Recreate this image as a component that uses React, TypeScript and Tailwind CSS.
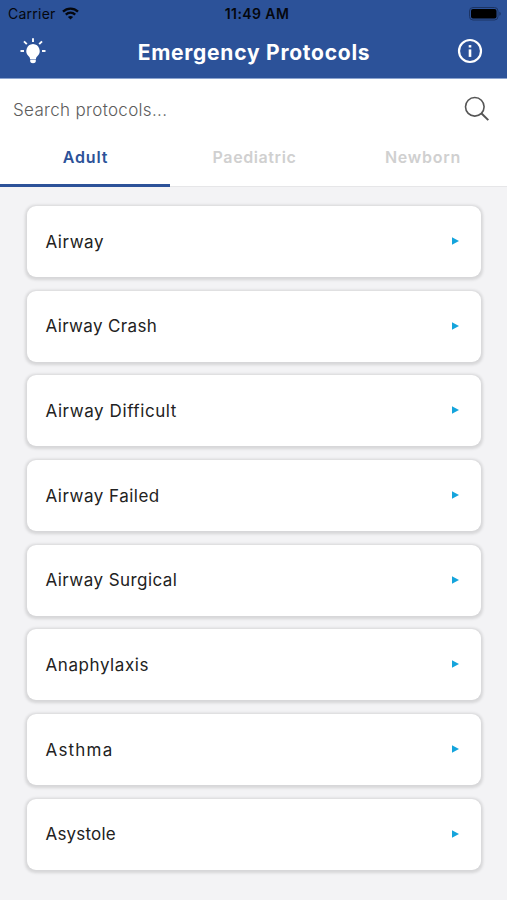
import { useState } from 'react';

interface Protocol {
  name: string;
  tracking: string;
}

const TABS = [
  { label: 'Adult', tracking: 'tracking-[0.9px]' },
  { label: 'Paediatric', tracking: 'tracking-[0.6px]' },
  { label: 'Newborn', tracking: 'tracking-[0.75px]' },
];

const PROTOCOLS: Protocol[] = [
  { name: 'Airway', tracking: 'tracking-[0.55px]' },
  { name: 'Airway Crash', tracking: 'tracking-[0.35px]' },
  { name: 'Airway Difficult', tracking: 'tracking-[0.58px]' },
  { name: 'Airway Failed', tracking: 'tracking-[0.5px]' },
  { name: 'Airway Surgical', tracking: 'tracking-[0.45px]' },
  { name: 'Anaphylaxis', tracking: 'tracking-[0.57px]' },
  { name: 'Asthma', tracking: 'tracking-[1.2px]' },
  { name: 'Asystole', tracking: 'tracking-[0.2px]' },
];

function WifiIcon() {
  return (
    <svg width="17" height="13" viewBox="0 0 17 13" fill="none" stroke="#05070d" strokeWidth="2.3">
      <path d="M1 4.6C5.2 0.5 11.8 0.5 16 4.6" />
      <path d="M3.8 7.6C6.5 5 10.5 5 13.2 7.6" />
      <path d="M8.5 12.6L5.9 9.9C7.4 8.6 9.6 8.6 11.1 9.9Z" fill="#05070d" stroke="none" />
    </svg>
  );
}

function BatteryIcon() {
  return (
    <svg width="33" height="14" viewBox="0 0 33 14">
      <rect x="0.5" y="0.5" width="28.5" height="12.5" rx="3.5" fill="none" stroke="#1c3464" />
      <rect x="2" y="2" width="25.5" height="9.5" rx="2" fill="#000" />
      <path d="M30.4 4.7C32.2 5.3 32.2 8.2 30.4 8.8Z" fill="#1c3464" />
    </svg>
  );
}

function BulbIcon() {
  return (
    <svg width="26" height="26" viewBox="0 0 26 26">
      <g stroke="#fff" strokeWidth="1.9">
        <path d="M13 0.3V4" />
        <path d="M4 3.4L6.8 6.2" />
        <path d="M22 3.4L19.2 6.2" />
        <path d="M0.5 13H4" />
        <path d="M22 13H25.5" />
      </g>
      <path
        d="M13 6A7 7 0 0 0 8.9 18.4C9.7 19.1 10 20 10 21H16C16 20 16.3 19.1 17.1 18.4A7 7 0 0 0 13 6Z"
        fill="#fff"
      />
      <path d="M10.2 21.6H15.8V23.3C15.8 24.6 14.6 25.2 13 25.2S10.2 24.6 10.2 23.3Z" fill="#fff" />
    </svg>
  );
}

function InfoIcon() {
  return (
    <svg width="26" height="26" viewBox="0 0 26 26">
      <circle cx="13" cy="13" r="11" fill="none" stroke="#fff" strokeWidth="2.2" />
      <path d="M11.7 7.1H14.3V9.5H11.7Z" fill="#fff" />
      <path d="M11.7 11.4H14.3V18.9H11.7Z" fill="#fff" />
    </svg>
  );
}

function SearchIcon() {
  return (
    <svg width="26" height="26" viewBox="0 0 26 26" fill="none" stroke="#555" strokeWidth="1.6">
      <circle cx="10.8" cy="10.8" r="9.3" />
      <path d="M17.3 17.3L24.3 24.1" strokeWidth="2" />
    </svg>
  );
}

export default function App() {
  const [activeTab, setActiveTab] = useState('Adult');

  return (
    <div className="flex h-[900px] w-[507px] flex-col overflow-hidden bg-[#f3f3f5] font-['Inter',sans-serif]">
      <header className="h-[79px] shrink-0 border-b border-[#8ba3cf] bg-[#2c5299]">
        <div className="grid h-[27px] grid-cols-[1fr_auto_1fr] items-center pr-[5px] pl-2 text-[14px] text-[#05070d]">
          <div className="flex items-center gap-1.5">
            <span className="tracking-[0.25px]">Carrier</span>
            <WifiIcon />
          </div>
          <span className="pl-1 text-center font-semibold tracking-[0.4px]">11:49 AM</span>
          <div className="flex justify-end">
            <BatteryIcon />
          </div>
        </div>
        <div className="flex h-12 items-center justify-between pr-6 pl-5">
          <button type="button" aria-label="Tips">
            <BulbIcon />
          </button>
          <h1 className="pt-[3px] pl-[5px] text-[21px] font-bold tracking-[0.75px] text-white">
            Emergency Protocols
          </h1>
          <button type="button" aria-label="Information">
            <InfoIcon />
          </button>
        </div>
      </header>

      <div className="flex h-[60px] shrink-0 items-center justify-between bg-white pr-[17px] pl-[13px]">
        <input
          type="text"
          placeholder="Search protocols..."
          className="w-[300px] pt-[3px] text-[17px] font-light tracking-[0.33px] text-[#555] outline-none placeholder:text-[#5c5c5c]"
        />
        <SearchIcon />
      </div>

      <nav className="grid h-12 shrink-0 grid-cols-[170px_168px_169px] border-b border-[#e6e6e8] bg-white">
        {TABS.map((tab) => (
          <button
            key={tab.label}
            type="button"
            onClick={() => setActiveTab(tab.label)}
            className={`-mb-px flex justify-center border-b-[3px] pt-1.5 pl-px text-[16px] leading-6 font-semibold ${tab.tracking} ${
              activeTab === tab.label
                ? 'border-[#2c5299] text-[#2c5299]'
                : 'border-transparent text-[#d0d0d0]'
            }`}
          >
            {tab.label}
          </button>
        ))}
      </nav>

      <main className="flex flex-col gap-[13.7px] px-[26.5px] pt-[18.9px]">
        {PROTOCOLS.map((protocol) => (
          <button
            key={protocol.name}
            type="button"
            className="flex h-[71px] shrink-0 items-center justify-between rounded-[9px] bg-white pr-[22px] pl-[19px] shadow-[0_1px_3px_1.5px_rgba(0,0,0,0.12)]"
          >
            <span className={`pt-[2px] text-[17px] text-[#222] ${protocol.tracking}`}>
              {protocol.name}
            </span>
            <svg className="mb-px" width="7" height="8" viewBox="0 0 7 8">
              <path d="M0 0.3L7 4L0 7.7Z" fill="#14a4dc" />
            </svg>
          </button>
        ))}
      </main>
    </div>
  );
}
